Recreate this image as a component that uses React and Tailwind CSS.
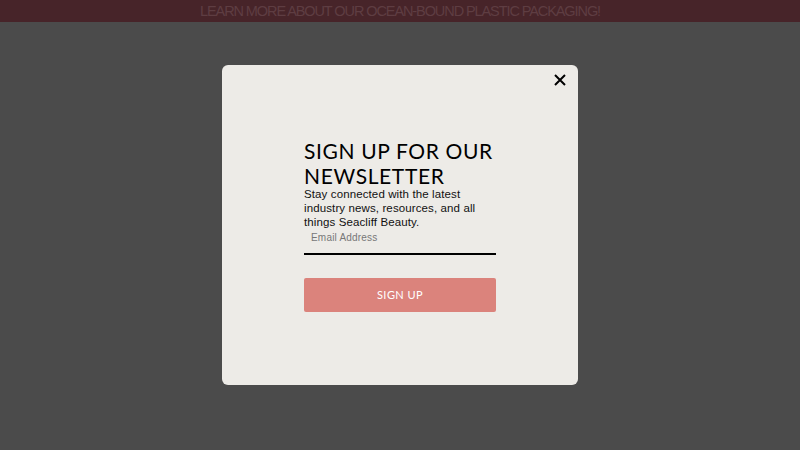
import React from 'react';

export default function App() {
  return (
    <div className="relative flex h-[450px] w-[800px] flex-col overflow-hidden bg-[#4b4b4b] font-['Liberation_Sans',sans-serif]">
      <div className="flex h-[22px] items-center justify-center bg-[#472429] text-[14.5px] uppercase leading-none tracking-[-0.075em] text-[#5e3d42]">
        Learn more about our ocean-bound plastic packaging!
      </div>
      <div className="flex flex-1 items-start justify-center pt-[43px]">
        <div className="relative flex h-[320px] w-[356px] items-center justify-center rounded-[6px] bg-[#edebe7]">
          <button type="button" className="absolute right-[12px] top-[9px] flex h-[12px] w-[12px] items-center justify-center p-0 text-black">
            <svg width="12" height="12" viewBox="0 0 12 12" fill="none" stroke="currentColor" strokeWidth="2">
              <path d="M1 1l10 10M11 1L1 11" />
            </svg>
          </button>
          <div className="flex w-[192px] flex-col">
            <h2 className="font-['Lato',sans-serif] text-[21px] font-normal uppercase leading-[25px] tracking-[0.03em] text-black">
              Sign up for our newsletter
            </h2>
            <p className="mt-[-1px] text-[11.5px] leading-[14px] tracking-[0.01em] text-[#111]">
              Stay connected with the latest industry news, resources, and all things Seacliff Beauty.
            </p>
            <div className="mt-[3px] border-b-2 border-black px-[7px] pb-[9px] text-[10px] leading-[12px] tracking-[0.02em] text-[#777]">
              Email Address
            </div>
            <button type="button" className="mt-[23px] h-[34px] w-full rounded-[2px] bg-[#db837c] font-['Lato',sans-serif] text-[11px] uppercase tracking-[0.04em] text-white">
              Sign up
            </button>
          </div>
        </div>
      </div>
    </div>
  );
}
